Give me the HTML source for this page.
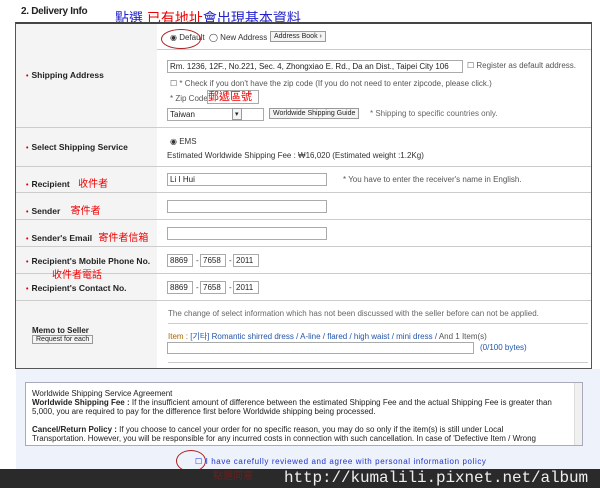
<!DOCTYPE html>
<html><head><meta charset="utf-8"><style>
*{box-sizing:border-box;margin:0;padding:0}
body{width:600px;height:488px;background:#fff;font-family:"Liberation Sans",Tahoma,sans-serif;font-size:8px;color:#333;position:relative;overflow:hidden}
.a{position:absolute}
.cn{font-family:"Liberation Sans","Noto Sans CJK TC",sans-serif}
.lab{position:absolute;left:26px;font-weight:bold;font-size:8.5px;color:#222}
.lab:before{content:"•";color:#d00;margin-right:3px;font-size:7px}
.inp{position:absolute;border:1px solid #aaa;background:#fff;height:13px;font-size:8px;padding:1px 2px;color:#222}
.hl{position:absolute;left:157px;width:434px;height:1px;background:#ccc}
.fl{position:absolute;left:16px;width:575px;height:1px;background:#ccc}
.btn{position:absolute;border:1px solid #999;background:#f4f4f4;font-size:7px;padding:1px 3px;color:#222}
.red{color:#e00;font-size:10px}
</style></head><body>
<div class="a" style="left:21px;top:6px;font-size:10px;font-weight:bold;color:#222;letter-spacing:-0.3px">2. Delivery Info</div>
<div class="a cn" style="left:115px;top:8px;font-size:14px;color:#22c">點選 <span style="color:#e00">已有地址</span>會出現基本資料</div>
<div class="a" style="left:15px;top:22px;width:577px;height:347px;border:1px solid #555;border-top:2px solid #444;background:#fff"></div>
<div class="a" style="left:16px;top:24px;width:141px;height:344px;background:#f4f4f4"></div>
<div class="hl" style="top:49px"></div>
<div class="fl" style="top:127px"></div>
<div class="fl" style="top:166px"></div>
<div class="fl" style="top:192px"></div>
<div class="fl" style="top:219px"></div>
<div class="fl" style="top:246px"></div>
<div class="fl" style="top:273px"></div>
<div class="fl" style="top:300px"></div>
<div class="hl" style="top:323px;left:168px;width:420px"></div>
<div class="hl" style="top:362px;left:168px;width:420px"></div>

<div class="a" style="left:161px;top:29px;width:40px;height:20px;border:1.5px solid #a22;border-radius:50%"></div>
<div class="a" style="left:170px;top:33px;font-size:8px">◉ Default &nbsp;◯ New Address</div>
<div class="btn" style="left:270px;top:31px">Address Book ›</div>

<div class="lab" style="top:70px">Shipping Address</div>
<div class="inp" style="left:167px;top:60px;width:296px">Rm. 1236, 12F., No.221, Sec. 4, Zhongxiao E. Rd., Da an Dist., Taipei City 106</div>
<div class="a" style="left:467px;top:61px;color:#555">☐ Register as default address.</div>
<div class="a" style="left:170px;top:79px;color:#555">☐ * Check if you don't have the zip code (If you do not need to enter zipcode, please click.)</div>
<div class="a" style="left:170px;top:94px;color:#555">* Zip Code</div>
<div class="a cn" style="left:207px;top:90px;height:14px;border:1px solid #aaa;width:52px;color:#e00;font-size:11px;line-height:12px">郵遞區號</div>
<div class="inp" style="left:167px;top:108px;width:97px">Taiwan</div>
<div class="btn" style="left:232px;top:108px;padding:1px 2px;font-size:7px">▾</div>
<div class="btn" style="left:269px;top:108px">Worldwide Shipping Guide</div>
<div class="a" style="left:370px;top:109px;color:#666">* Shipping to specific countries only.</div>

<div class="lab" style="top:142px">Select Shipping Service</div>
<div class="a" style="left:170px;top:137px">◉ EMS</div>
<div class="a" style="left:167px;top:151px">Estimated Worldwide Shipping Fee : ₩16,020 (Estimated weight :1.2Kg)</div>

<div class="lab" style="top:175px">Recipient <span class="cn red" style="font-weight:normal;margin-left:6px">收件者</span></div>
<div class="inp" style="left:167px;top:173px;width:160px">Li I Hui</div>
<div class="a" style="left:343px;top:175px;color:#555">* You have to enter the receiver's name in English.</div>
<div class="lab" style="top:202px">Sender <span class="cn red" style="font-weight:normal;margin-left:8px">寄件者</span></div>
<div class="inp" style="left:167px;top:200px;width:160px"></div>
<div class="lab" style="top:229px">Sender's Email <span class="cn red" style="font-weight:normal;margin-left:4px">寄件者信箱</span></div>
<div class="inp" style="left:167px;top:227px;width:160px"></div>
<div class="lab" style="top:256px">Recipient's Mobile Phone No.</div>
<div class="a cn red" style="left:52px;top:266px">收件者電話</div>
<div class="lab" style="top:283px">Recipient's Contact No.</div>
<div class="inp" style="left:167px;top:254px;width:26px">8869</div><div class="a" style="left:196px;top:256px">-</div>
<div class="inp" style="left:200px;top:254px;width:26px">7658</div><div class="a" style="left:229px;top:256px">-</div>
<div class="inp" style="left:233px;top:254px;width:26px">2011</div>
<div class="inp" style="left:167px;top:281px;width:26px">8869</div><div class="a" style="left:196px;top:283px">-</div>
<div class="inp" style="left:200px;top:281px;width:26px">7658</div><div class="a" style="left:229px;top:283px">-</div>
<div class="inp" style="left:233px;top:281px;width:26px">2011</div>

<div class="a" style="left:168px;top:309px;color:#666">The change of select information which has not been discussed with the seller before can not be applied.</div>
<div class="a" style="left:32px;top:326px;font-weight:bold;color:#222">Memo to Seller</div>
<div class="btn" style="left:32px;top:335px;padding:0 3px">Request for each</div>
<div class="a cn" style="left:168px;top:331px;color:#25a"><span style="color:#a60">Item :</span> [기타] Romantic shirred dress / A-line / flared / high waist / mini dress / <span style="color:#555">And 1 Item(s)</span></div>
<div class="inp" style="left:167px;top:342px;width:307px;height:12px"></div>
<div class="a" style="left:480px;top:343px;color:#25a">(0/100 bytes)</div>

<div class="a" style="left:16px;top:369px;width:584px;height:100px;background:#eef2fb"></div>
<div class="a" style="left:25px;top:382px;width:558px;height:64px;border:1px solid #aab;background:#fff;overflow:hidden;padding:6px 6px;font-size:8px;line-height:9px;color:#222">
<div style="width:525px">Worldwide Shipping Service Agreement<br><b>Worldwide Shipping Fee :</b> If the insufficient amount of difference between the estimated Shipping Fee and the actual Shipping Fee is greater than 5,000, you are required to pay for the difference first before Worldwide shipping being processed.<br><br><b>Cancel/Return Policy :</b> If you choose to cancel your order for no specific reason, you may do so only if the item(s) is still under Local Transportation. However, you will be responsible for any incurred costs in connection with such cancellation. In case of 'Defective Item / Wrong</div></div>
<div class="a" style="left:574px;top:383px;width:8px;height:62px;background:#f0f0f0;border-left:1px solid #ddd"></div>
<div class="a" style="left:195px;top:457px;color:#23c;letter-spacing:0.6px">☐ I have carefully reviewed and agree with personal information policy</div>
<div class="a" style="left:176px;top:450px;width:30px;height:22px;border:1.5px solid #a22;border-radius:50%"></div>
<div class="a" style="left:0;top:469px;width:600px;height:19px;background:#2a2a2a"></div>
<div class="a cn" style="left:213px;top:467px;font-size:10px;color:#622">點選同意</div>
<div class="a" style="left:284px;top:469px;font-family:'Liberation Mono',monospace;font-size:16px;line-height:18px;color:#eee;letter-spacing:-0.1px">http://kumalili.pixnet.net/album</div>
</body></html>
